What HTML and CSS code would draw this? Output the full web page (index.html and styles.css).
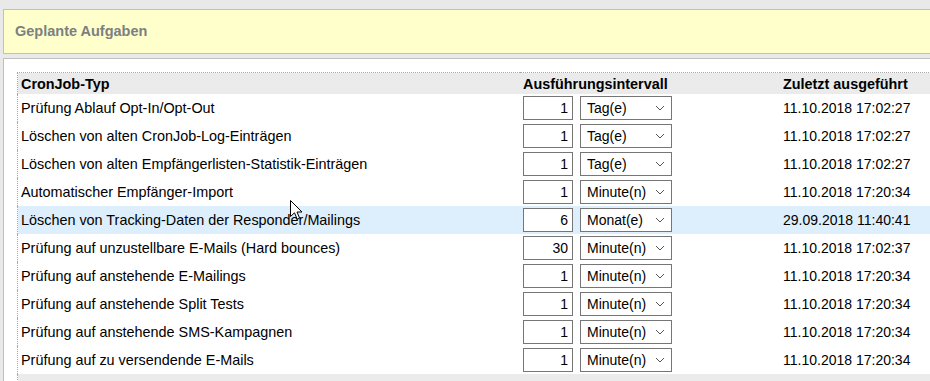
FILE: index.html
```html
<!DOCTYPE html>
<html>
<head>
    <title>Geplante Aufgaben</title>
    <link rel="stylesheet" href="styles.css">
</head>
<body>

<div class="title_box">Geplante Aufgaben</div>

<div class="panel">
    <table class="cron_table">
        <thead>
        <tr>
            <th class="col_type">CronJob-Typ</th>
            <th class="col_interval">Ausführungsintervall</th>
            <th class="col_last">Zuletzt ausgeführt</th>
        </tr>
        </thead>
        <tbody>
        <tr>
            <td>Prüfung Ablauf Opt-In/Opt-Out</td>
            <td><div class="interval"><input class="num" type="text" value="1"><div class="sel"><select><option>Tag(e)</option></select><svg class="chev" width="10" height="6" viewBox="0 0 10 6"><path d="M1 1 L5 5 L9 1" fill="none" stroke="#555" stroke-width="1"/></svg></div></div></td>
            <td>11.10.2018 17:02:27</td>
        </tr>
        <tr>
            <td>Löschen von alten CronJob-Log-Einträgen</td>
            <td><div class="interval"><input class="num" type="text" value="1"><div class="sel"><select><option>Tag(e)</option></select><svg class="chev" width="10" height="6" viewBox="0 0 10 6"><path d="M1 1 L5 5 L9 1" fill="none" stroke="#555" stroke-width="1"/></svg></div></div></td>
            <td>11.10.2018 17:02:27</td>
        </tr>
        <tr>
            <td>Löschen von alten Empfängerlisten-Statistik-Einträgen</td>
            <td><div class="interval"><input class="num" type="text" value="1"><div class="sel"><select><option>Tag(e)</option></select><svg class="chev" width="10" height="6" viewBox="0 0 10 6"><path d="M1 1 L5 5 L9 1" fill="none" stroke="#555" stroke-width="1"/></svg></div></div></td>
            <td>11.10.2018 17:02:27</td>
        </tr>
        <tr>
            <td>Automatischer Empfänger-Import</td>
            <td><div class="interval"><input class="num" type="text" value="1"><div class="sel"><select><option>Minute(n)</option></select><svg class="chev" width="10" height="6" viewBox="0 0 10 6"><path d="M1 1 L5 5 L9 1" fill="none" stroke="#555" stroke-width="1"/></svg></div></div></td>
            <td>11.10.2018 17:20:34</td>
        </tr>
        <tr class="hover">
            <td>Löschen von Tracking-Daten der Responder/Mailings</td>
            <td><div class="interval"><input class="num" type="text" value="6"><div class="sel"><select><option>Monat(e)</option></select><svg class="chev" width="10" height="6" viewBox="0 0 10 6"><path d="M1 1 L5 5 L9 1" fill="none" stroke="#555" stroke-width="1"/></svg></div></div></td>
            <td>29.09.2018 11:40:41</td>
        </tr>
        <tr>
            <td>Prüfung auf unzustellbare E-Mails (Hard bounces)</td>
            <td><div class="interval"><input class="num" type="text" value="30"><div class="sel"><select><option>Minute(n)</option></select><svg class="chev" width="10" height="6" viewBox="0 0 10 6"><path d="M1 1 L5 5 L9 1" fill="none" stroke="#555" stroke-width="1"/></svg></div></div></td>
            <td>11.10.2018 17:02:37</td>
        </tr>
        <tr>
            <td>Prüfung auf anstehende E-Mailings</td>
            <td><div class="interval"><input class="num" type="text" value="1"><div class="sel"><select><option>Minute(n)</option></select><svg class="chev" width="10" height="6" viewBox="0 0 10 6"><path d="M1 1 L5 5 L9 1" fill="none" stroke="#555" stroke-width="1"/></svg></div></div></td>
            <td>11.10.2018 17:20:34</td>
        </tr>
        <tr>
            <td>Prüfung auf anstehende Split Tests</td>
            <td><div class="interval"><input class="num" type="text" value="1"><div class="sel"><select><option>Minute(n)</option></select><svg class="chev" width="10" height="6" viewBox="0 0 10 6"><path d="M1 1 L5 5 L9 1" fill="none" stroke="#555" stroke-width="1"/></svg></div></div></td>
            <td>11.10.2018 17:20:34</td>
        </tr>
        <tr>
            <td>Prüfung auf anstehende SMS-Kampagnen</td>
            <td><div class="interval"><input class="num" type="text" value="1"><div class="sel"><select><option>Minute(n)</option></select><svg class="chev" width="10" height="6" viewBox="0 0 10 6"><path d="M1 1 L5 5 L9 1" fill="none" stroke="#555" stroke-width="1"/></svg></div></div></td>
            <td>11.10.2018 17:20:34</td>
        </tr>
        <tr>
            <td>Prüfung auf zu versendende E-Mails</td>
            <td><div class="interval"><input class="num" type="text" value="1"><div class="sel"><select><option>Minute(n)</option></select><svg class="chev" width="10" height="6" viewBox="0 0 10 6"><path d="M1 1 L5 5 L9 1" fill="none" stroke="#555" stroke-width="1"/></svg></div></div></td>
            <td>11.10.2018 17:20:34</td>
        </tr>
        </tbody>
        <tfoot>
        <tr><td colspan="3"></td></tr>
        </tfoot>
    </table>
</div>

<svg class="cursor" width="13" height="21" viewBox="0 0 13 21">
    <path d="M0.5 0.5 L0.5 16.5 L4.5 12.8 L7.2 19.2 L9.6 18.2 L7 12 L12 12 Z" fill="#fff" stroke="#000" stroke-width="1" stroke-linejoin="miter"/>
</svg>

</body>
</html>
```

FILE: styles.css
```css
body, html {
    margin: 0;
    background-color: #E9E9E9;
    font-family: "Liberation Sans", Arial, sans-serif;
    font-size: 14px;
    overflow: hidden;
}

body {
    position: relative;
    width: 960px;
}

.title_box {
    margin: 9px 0 0 3px;
    height: 43px;
    line-height: 43px;
    padding-left: 11px;
    background-color: #FFFFCC;
    border: 1px solid #C0C0C0;
    border-right: none;
    color: #7B8080;
    font-weight: bold;
    font-size: 14.5px;
}

.panel {
    margin: 4px 0 0 3px;
    padding: 13px 0 0 13px;
    background-color: #fff;
    border-top: 1px solid #C0C0C0;
    border-left: 1px solid #C0C0C0;
}

.cron_table {
    border-collapse: collapse;
    width: 940px;
    border-top: 1px dotted #A8A8A8;
    border-left: 1px dotted #A8A8A8;
}

.cron_table th {
    background-color: #EBEBEB;
    text-align: left;
    font-weight: bold;
    color: #000;
    height: 21px;
    padding: 0 3px;
    vertical-align: middle;
    font-size: 14.4px;
}

.cron_table td {
    height: 28px;
    padding: 0 3px;
    vertical-align: middle;
    color: #000;
}

.cron_table td.col_text,
.cron_table tbody td:first-child {
    font-size: 14.4px;
}

.col_type {
    width: 496px;
}

.col_interval {
    width: 254px;
}

.cron_table tr.hover td {
    background-color: #DDEEFC;
}

.cron_table tfoot td {
    background-color: #EBEBEB;
    height: 12px;
}

.interval {
    display: flex;
    gap: 7px;
}

.num {
    box-sizing: border-box;
    width: 50px;
    height: 24px;
    border: 1px solid #767676;
    padding: 0 4px;
    text-align: right;
    font: 14px "Liberation Sans", Arial, sans-serif;
    color: #000;
    background: #fff;
}

.sel {
    position: relative;
}

.sel select {
    -webkit-appearance: none;
    appearance: none;
    box-sizing: border-box;
    width: 92px;
    height: 24px;
    border: 1px solid #767676;
    border-radius: 0;
    padding: 0 0 0 6px;
    font: 14px "Liberation Sans", Arial, sans-serif;
    color: #000;
    background: #fff;
}

.chev {
    position: absolute;
    right: 7px;
    top: 9px;
}

.cursor {
    position: absolute;
    left: 290px;
    top: 200px;
}
```
